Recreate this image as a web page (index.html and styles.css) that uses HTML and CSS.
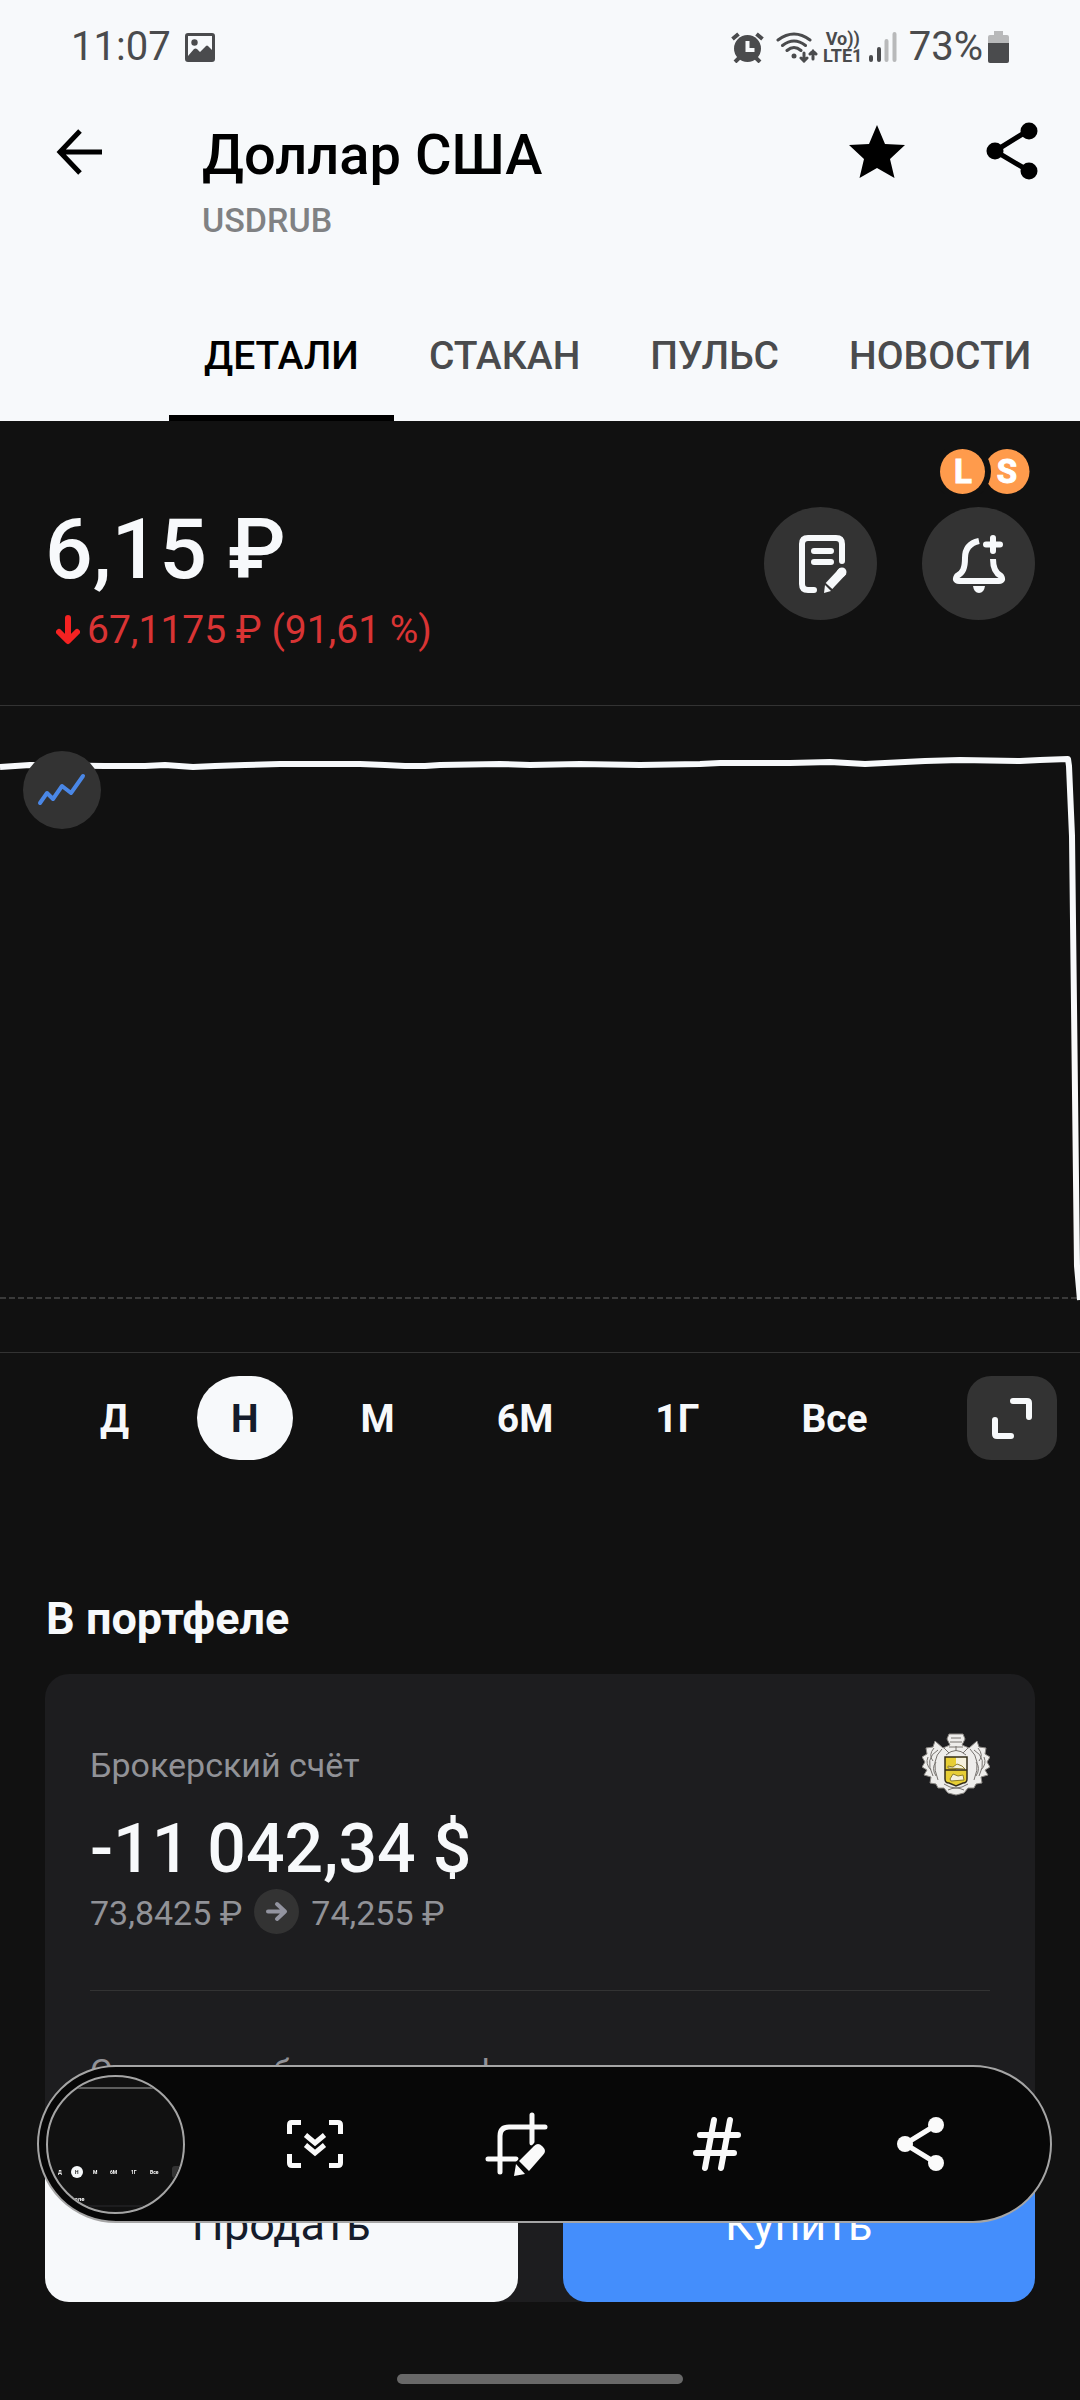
FILE: index.html
```
<!DOCTYPE html>
<html dir="ltr" lang="ru">
<head>
  <meta charset="UTF-8">
  <meta name="viewport" content="width=device-width">
  <title>Доллар США</title>
  <link rel="stylesheet" href="styles.css">
</head>
<body>
  <header class="header">
    <div class="status">
      <span class="time">11:07</span>
      <svg class="status-image" width="30" height="29" viewBox="0 0 30 29"><path fill-rule="evenodd" d="M3 0h24q3 0 3 3v23q0 3-3 3H3q-3 0-3-3V3q0-3 3-3zM3 3v20l6-7q1.500-1 3 0l3 3 6-6q1-1 2 0l4 4V3z"/><circle cx="9.500" cy="9.500" r="3.200"/></svg>
      <span class="spacer"></span>
      <svg width="33" height="31" viewBox="0 0 33 31"><circle cx="16.500" cy="16.500" r="13.500"/><path d="M1.500 7l6-5M31.500 7l-6-5M4 30l5-5M29 30l-5-5" stroke="#4a4b4d" stroke-width="4" fill="none"/><path d="M16.500 9v9h7" stroke="#f7f9fb" stroke-width="4" fill="none"/></svg>
      <svg class="wifi" width="42" height="31" viewBox="0 0 42 31"><g fill="none" stroke="#4a4b4d" stroke-width="3" stroke-linecap="round"><path d="M2 8q16-12 32 0M6.500 13.500q11.500-9 23 0M11 18.500q7-6 14 0"/><path d="M28 21v8m-3-3l3 3 3-3M37 27v-8m-3 3l3-3 3 3"/></g><circle cx="18" cy="24" r="2.500"/></svg>
      <span class="lte"><span>Vo))</span><span>LTE1</span></span>
      <svg class="signal" width="28" height="30" viewBox="0 0 28 30"><path d="M2 25v3M10 17v11" stroke="#4a4b4d" stroke-width="4" stroke-linecap="round"/><path d="M17.500 9v19M25.500 2v26" stroke="#b8b9ba" stroke-width="4" stroke-linecap="round"/></svg>
      <span class="charge">73%</span>
      <svg width="21" height="32" viewBox="0 0 21 32"><path d="M6 0h9v4h4q2 0 2 2v7H0V6q0-2 2-2h4z" fill="#b8b9ba"/><path d="M0 12h21v18q0 2-2 2H2q-2 0-2-2z"/></svg>
    </div>

    <div class="appbar">
      <button class="icon" aria-label="Назад"><svg width="60" height="60" viewBox="0 0 60 60"><path d="M53 30H12M31 9L11 30l20 21" fill="none" stroke="#000" stroke-width="5"/></svg></button>
      <div class="heading">
        <h1>Доллар США</h1>
        <p>USDRUB</p>
      </div>
      <button class="icon" aria-label="В избранное"><svg width="60" height="60" viewBox="0 0 60 60"><path d="M30 3l8 19 20 1-15 14 4.500 19L30 46 12.500 56 17 37 2 23l20-1z"/></svg></button>
      <button class="icon" aria-label="Поделиться"><svg width="60" height="60" viewBox="0 0 60 60"><path d="M47 8L13 29l34 20" fill="none" stroke="#000" stroke-width="5"/><circle cx="47" cy="9" r="8.500"/><circle cx="13" cy="29" r="8.500"/><circle cx="47" cy="49" r="8.500"/></svg></button>
    </div>

    <nav class="tabs">
      <a href="#details" class="active">ДЕТАЛИ</a>
      <a href="#book">СТАКАН</a>
      <a href="#pulse">ПУЛЬС</a>
      <a href="#news">НОВОСТИ</a>
    </nav>
  </header>

  <section class="quote" id="details">
    <div class="quote-text">
      <div class="price">6,15 ₽</div>
      <div class="change">
        <svg width="24" height="30" viewBox="0 0 24 30"><path d="M12 3v22M3 17l9 9 9-9" fill="none" stroke="#f52222" stroke-width="6" stroke-linecap="round" stroke-linejoin="round"/></svg>
        <span>67,1175 ₽ (91,61 %)</span>
      </div>
    </div>
    <div class="quote-side">
      <div class="badges">
        <svg width="90" height="45" viewBox="0 0 90 45">
          <circle cx="67" cy="22.500" r="22.500" fill="#ff9b4c"/>
          <circle cx="22.500" cy="22.500" r="28.500" fill="#111"/>
          <circle cx="22.500" cy="22.500" r="22.500" fill="#ff9b4c"/>
          <text x="23" y="34">L</text>
          <text x="67" y="34">S</text>
        </svg>
      </div>
      <div class="rounds">
        <button class="round" aria-label="Заявка">
          <svg width="60" height="60" viewBox="0 0 60 60" fill="none" stroke="#f7f9fb" stroke-width="6" stroke-linecap="round" stroke-linejoin="round"><path d="M23 56h-6q-6 0-6-6V10q0-6 6-6h28q6 0 6 6v17"/><path d="M23 17h17M23 28h17" /><path d="M38 52l14-15" stroke-width="9" stroke-linecap="butt"/><path d="M50 39l1-1" stroke-width="9"/><path d="M34 51l6 6-7 2z" fill="#f7f9fb" stroke="none"/></svg>
        </button>
        <button class="round" aria-label="Уведомление">
          <svg width="60" height="60" viewBox="0 0 60 60" fill="none" stroke="#f7f9fb" stroke-width="6" stroke-linejoin="round"><path d="M30 7C21 9 16 15 16 24C16 34 14 39 8 42q-3 5 2 5h40q5 0 2-5C46 39 44 33 44 25"/><path d="M44 4v13M37 10.500h14" stroke-linecap="round"/><path d="M24 52h12q-1 7-6 7t-6-7z" fill="#f7f9fb" stroke="none"/></svg>
        </button>
      </div>
    </div>
  </section>

  <section class="chart">
    <svg class="graph" viewBox="0 0 1080 646" preserveAspectRatio="none">
      <path d="M0 592h1080" stroke="#3a3a3a" stroke-width="2" stroke-dasharray="6 3"/>
      <path d="M0 61L30 59L105 60L145 60L165 59L193 61L215 60L245 59L280 58L360 58L385 59L405 60L425 60L440 59L500 58L530 59L580 58L640 59L700 58L720 57L750 57L790 57L830 56L865 58L905 56L925 55L960 54L1020 55L1040 54L1068 53L1069 60L1072 130L1074 300L1077 560L1080 594" fill="none" stroke="#f7f9fb" stroke-width="6" stroke-linejoin="round"/>
    </svg>
    <button class="chart-type" aria-label="Тип графика"><svg width="50" height="34" viewBox="0 0 50 34"><path d="M3 30l7-10 6 6 9-13 9 7L46 3" fill="none" stroke="#4a87e6" stroke-width="4" stroke-linecap="round" stroke-linejoin="round"/></svg></button>
  </section>

  <div class="periods">
    <button>Д</button>
    <button class="selected">Н</button>
    <button>М</button>
    <button>6М</button>
    <button>1Г</button>
    <button>Все</button>
    <button class="expand" aria-label="На весь экран"><svg width="42" height="42" viewBox="0 0 42 42"><path d="M22 4h14q2 0 2 2v14M4 23v14q0 2 2 2h14" fill="none" stroke="#f7f9fb" stroke-width="6" stroke-linecap="round"/></svg></button>
  </div>

  <main class="portfolio">
    <h2>В портфеле</h2>
    <div class="card">
      <div class="account">
        <span>Брокерский счёт</span>
        <svg width="68" height="64" viewBox="0 0 68 64">
          <path d="M27 2h14l2 5-3 6 7 3 8-7 2 6 7 1-1 6 5 3-3 5 3 5-5 3 3 5-7 2 1 6-6 1-2 4-6 0-4 5-8 2-8-2-4-5-6 0-2-4-6-1 1-6-7-2 3-5-5-3 3-5-3-5 5-3-1-6 7-1 2-6 8 7 7-3-3-6z" fill="#eeedeb" stroke="#8a8783" stroke-width="1" stroke-linejoin="round"/>
          <path d="M28 10h12M27 15h14M29 6h10M20 17q-12 11-4 31M16 18Q2 26 11 44M12 16q-6 7-1 13M6 25q-3 7 3 13M14 30q-5 6 0 14M48 17q12 11 4 31M52 18q14 8 5 26M56 16q6 7 1 13M62 25q3 7-3 13M54 30q5 6 0 14M22 52q12 8 24 0M26 58q8-4 16 0M24 23q10-9 20 0M27 21l-5-5M34 19v-5M41 21l5-5" fill="none" stroke="#77736f" stroke-width="1"/>
          <path d="M23 25h22v22q0 4-4 4l-7 3-7-3q-4 0-4-4z" fill="#e7ce35"/>
          <path d="M34 25h11v13H34z" fill="#f5f1dc"/>
          <path d="M26 34l5 1 4-3 5 2 3 3-17-1zM28 47l3-5 5 2 5-1 1 5-13 1z" fill="#f5f1dc" stroke="#8c7d2c" stroke-width="1"/>
          <path d="M23 25h22v22q0 4-4 4l-7 3-7-3q-4 0-4-4zM23 38h22" fill="none" stroke="#352e18" stroke-width="1.500"/>
        </svg>
      </div>
      <div class="amount">-11 042,34 $</div>
      <div class="rates">
        <span>73,8425 ₽</span>
        <svg width="45" height="45" viewBox="0 0 45 45"><circle cx="22.500" cy="22.500" r="22.500" fill="#333"/><path d="M14 22.500h17M23 15l8 7.500-8 7.500" fill="none" stroke="#9394a0" stroke-width="4" stroke-linecap="round" stroke-linejoin="round"/></svg>
        <span>74,255 ₽</span>
      </div>
      <hr>
      <div class="label">Стоимость бумаг в портфеле</div>
      <div class="actions">
        <button class="sell">Продать</button>
        <button class="buy">Купить</button>
      </div>
    </div>
  </main>

  <div class="home"></div>

  <!-- panel shown over the app after a screen capture -->
  <div class="capture">
    <button class="preview" aria-label="Снимок">
      <svg width="135" height="138" viewBox="0 0 135 138">
        <path d="M0 13h135" stroke="#aaa" stroke-width="1"/>
        <circle cx="29" cy="97" r="6" fill="#f7f9fb"/>
        <g font-size="5"><text x="10" y="99">Д</text><text x="27" y="99" class="dark">Н</text><text x="45" y="99">М</text><text x="62" y="99">6М</text><text x="83" y="99">1Г</text><text x="102" y="99">Все</text></g>
        <text x="4" y="126" font-size="6">В портфеле</text>
        <rect x="124" y="91" width="11" height="12" rx="3" fill="#333"/>
        <path d="M20 131h80" stroke="#1d1d1f" stroke-width="2"/>
      </svg>
    </button>
    <button class="icon" aria-label="Прокрутка"><svg width="64" height="64" viewBox="0 0 64 64" fill="none" stroke="#fafafa"><path d="M6.500 22v-9q0-2.500 2-2.500H18M46 10.500h9q2.500 0 2.500 2.500v9M57.500 42v9q0 2.500-2.500 2.500h-9M18 53.500H9q-2.500 0-2.500-2.500v-9" stroke-width="5"/><path d="M22.500 23L32 31l9.500-8M22.500 33L32 41l9.500-8" stroke-width="5"/></svg></button>
    <button class="icon" aria-label="Обрезать"><svg width="64" height="64" viewBox="0 0 64 64"><path d="M3 47h28M15 60V24q0-9 9-9h36M47 3v28" fill="none" stroke="#fafafa" stroke-width="5" stroke-linecap="round"/><path d="M28 53l25-26 12 12-28 28z" fill="#070707"/><path d="M34 49l15-15q4-4 8 0l1 1q4 4 0 8L44 59zM31 52l9 10-11 2z" fill="#fafafa"/></svg></button>
    <button class="icon" aria-label="Теги"><svg width="64" height="64" viewBox="0 0 64 64"><path d="M13 23h38M9 41h38M27 8l-9 48M43 8l-9 48" fill="none" stroke="#fafafa" stroke-width="6" stroke-linecap="round"/></svg></button>
    <button class="icon" aria-label="Поделиться"><svg width="64" height="64" viewBox="0 0 64 64" fill="#fafafa"><path d="M47 13L16 32l31 19" fill="none" stroke="#fafafa" stroke-width="5"/><circle cx="47" cy="13" r="8"/><circle cx="16" cy="32" r="8"/><circle cx="47" cy="51" r="8"/></svg></button>
  </div>
</body>
</html>
```
FILE: styles.css
```
* {box-sizing: border-box;}
body {margin: 0; min-height: 100vh; font-family: Roboto, "Liberation Sans", sans-serif; font-size: 34px; line-height: 40px; color: #f7f9fb; background: #111;}
h1, h2, p {margin: 0;}
svg {display: block; flex: none;}
button {display: flex; align-items: center; justify-content: center; margin: 0; padding: 0; border: 0; font: inherit; color: inherit; background: none; cursor: pointer;}
a {color: inherit; text-decoration: none;}

.header {color: #000; background: #f7f9fb;}
.status {display: flex; align-items: center; height: 92px; padding: 2px 71px 0; font-size: 40px; color: #4a4b4d; fill: #4a4b4d;}
.status-image {margin-left: 14px;}
.spacer {flex: 1;}
.wifi {margin-left: 12px;}
.lte {display: flex; flex-direction: column; align-items: center; width: 40px; margin-left: 5px; font-size: 18px; line-height: 17px; font-weight: 700;}
.signal {margin-left: 6px;}
.charge {margin: 0 5px 0 12px;}

.appbar {display: flex; align-items: flex-start; height: 197px; padding: 30px 38px 0 49px;}
.icon {flex: none;}
.heading {flex: 1; margin-left: 93px;}
.heading h1 {padding-top: 1px; font-size: 56px; line-height: 64px; font-weight: 500;}
.heading p {margin-top: 13px; font-weight: 500; color: #808183;}
.appbar .icon + .icon {margin-left: 75px;}

.tabs {display: flex; padding-left: 169px;}
.tabs a {padding: 2px 35px 0; font-size: 39px; line-height: 130px; font-weight: 500; color: #4a4b4d;}
.tabs .active {color: #000; box-shadow: inset 0 -6px #000;}

.quote {display: flex; justify-content: space-between; height: 285px; padding: 28px 45px 0; border-bottom: 1px solid #333;}
.price {margin-top: 51px; font-size: 84px; line-height: 100px; font-weight: 500;}
.change {display: flex; align-items: center; gap: 7px; margin-top: 6px; padding-left: 11px; font-size: 39px; line-height: 48px; color: #d93434;}
.quote-side {display: flex; flex-direction: column; align-items: flex-end;}
.badges {margin: 0 5px 13px 0;}
.badges text {font-size: 33px; font-weight: 700; fill: #fff; stroke: #fff; text-anchor: middle;}
.rounds {display: flex; gap: 45px;}
.round {width: 113px; height: 113px; border-radius: 50%; background: #333;}

.chart {position: relative; border-bottom: 1px solid #333;}
.graph {width: 100%; height: 646px;}
.chart-type {position: absolute; top: 45px; left: 23px; width: 78px; height: 78px; border-radius: 50%; background: #333;}

.periods {display: flex; gap: 34px; padding: 23px 23px 0 66px; font-size: 39px; font-weight: 700;}
.periods button {height: 84px; padding: 2px 34px 0; border-radius: 42px;}
.periods .selected {color: #151c2b; background: #f7f9fb;}
.periods .expand {width: 90px; margin-left: auto; padding: 0; border-radius: 24px; background: #333;}

.portfolio {padding: 133px 45px 0;}
.portfolio h2 {padding-left: 1px; font-size: 45px; line-height: 52px; font-weight: 700;}
.card {margin-top: 29px; padding: 58px 45px 0; border-radius: 24px; color: #919297; background: #1d1d1f;}
.account {display: flex; align-items: center; justify-content: space-between;}
.account span {padding-top: 2px;}
.amount {margin-top: 13px; font-size: 68px; line-height: 80px; font-weight: 500; color: #f7f9fb;}
.rates {display: flex; align-items: center; gap: 12px;}
.rates span {padding-top: 2px;}
.card hr {height: 1px; margin: 56px 0 60px; border: 0; background: #333;}
.actions {display: flex; gap: 45px; margin: 61px -45px 0;}
.actions button {flex: 1; height: 150px; padding-bottom: 5px; border-radius: 24px; font-size: 45px;}
.sell {color: #151c2b; background: #f7f9fb;}
.buy {color: #fff; background: #448efc;}

.home {width: 286px; height: 10px; margin: 72px auto 16px; border-radius: 5px; background: #686868;}

.capture {position: fixed; right: 28px; bottom: 177px; left: 37px; display: flex; align-items: center; justify-content: flex-end; gap: 138px; height: 158px; padding: 0 97px 0 7px; border: 2px solid #a5a5a5; border-radius: 79px; background: #070707;}
.preview {width: 139px; height: 139px; margin-right: -40px; overflow: hidden; border: 2px solid #a5a5a5; border-radius: 50%; background: #111;}
.preview text {fill: #fff; font-weight: 700;}
.preview .dark {fill: #111;}
```
